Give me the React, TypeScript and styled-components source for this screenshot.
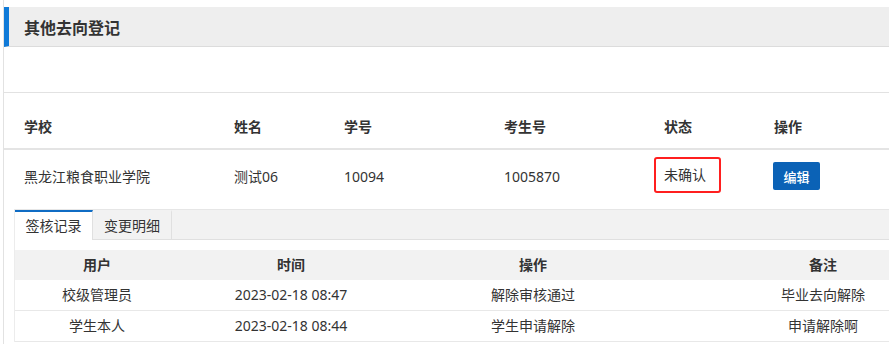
import React from "react";
import styled, { createGlobalStyle } from "styled-components";

const Global = createGlobalStyle`
  html, body { margin: 0; padding: 0; overflow: hidden; background: #fff; }
  body { font-family: "Noto Sans", "Noto Sans CJK SC", sans-serif; color: #333; font-size: 14px; }
`;

const Page = styled.div`
  margin-left: 3px;
  width: calc(100vw - 3px);
  min-height: 344px;
  overflow: hidden;
  border-left: 1px solid #e2e2e2;
  padding-top: 7px;
  box-sizing: border-box;
`;

const TitleBar = styled.div`
  height: 39px;
  background: #eeeeee;
  border-left: 5px solid #0f7ad8;
  border-bottom: 1px solid #dcdcdc;
  display: flex;
  align-items: center;
  padding-left: 15px;
  font-size: 16px;
  font-weight: 700;
  color: #333;
`;

const Toolbar = styled.div`
  height: 45px;
  border-bottom: 1px solid #e2e2e2;
`;

const cols = "210px 110px 160px 160px 110px 1fr";

const HeadRow = styled.div`
  display: grid;
  grid-template-columns: ${cols};
  height: 55px;
  border-bottom: 2px solid #e4e4e4;
  align-items: end;
`;

const HeadCell = styled.div`
  padding: 0 0 11px 20px;
  font-weight: 700;
  line-height: 20px;
`;

const DataRow = styled.div`
  display: grid;
  grid-template-columns: ${cols};
  height: 59px;
  align-items: center;
`;

const Cell = styled.div`
  padding-left: 20px;
  line-height: 20px;
  margin-top: -6px;
`;

const StatusBox = styled.span`
  display: inline-flex;
  align-items: center;
  margin-left: -10px;
  width: 67px;
  height: 36px;
  box-sizing: border-box;
  border: 2px solid #ff1f1f;
  border-radius: 3px;
  padding-left: 8px;
  margin-top: -4px;
`;

const EditButton = styled.button`
  font-family: "Noto Sans CJK SC", sans-serif;
  margin-left: -1px;
  height: 28px;
  width: 47px;
  border: none;
  border-radius: 2px;
  background: #0b62b6;
  color: #fff;
  font-size: 13px;
  font-weight: 500;
  padding: 0;
  margin-top: -1px;
`;

const Detail = styled.div`
  margin-left: 10px;
  border-left: 1px solid #ececec;
  border-top: 1px solid #e6e6e6;
`;

const TabBar = styled.div`
  display: flex;
  height: 29px;
  background: #f2f2f2;
  border-bottom: 1px solid #e0e0e0;
`;

const Tab = styled.div<{ $active?: boolean }>`
  width: ${(p) => (p.$active ? "78px" : "79px")};
  box-sizing: border-box;
  display: flex;
  align-items: center;
  justify-content: center;
  font-size: 14px;
  color: #333;
  background: ${(p) => (p.$active ? "#fff" : "transparent")};
  border-top: 2px solid ${(p) => (p.$active ? "#0f6cc4" : "transparent")};
  border-right: 1px solid #e0e0e0;
  height: ${(p) => (p.$active ? "30px" : "29px")};
  padding-bottom: 2px;
`;

const innerCols = "164px 224px 260px 320px";

const InnerTable = styled.div`
  margin-top: 10px;
`;

const InnerHead = styled.div`
  display: grid;
  grid-template-columns: ${innerCols};
  height: 30px;
  background: #f2f2f2;
  align-items: center;
  font-weight: 700;
`;

const InnerRow = styled.div<{ $first?: boolean }>`
  display: grid;
  grid-template-columns: ${innerCols};
  height: 30px;
  border-top: ${(p) => (p.$first ? "none" : "1px solid #e8e8e8")};
  align-items: center;
`;

const InnerCell = styled.div`
  text-align: center;
  line-height: 20px;
  white-space: nowrap;
`;

const RowsWrap = styled.div`
  & > div:last-child { border-bottom: 1px solid #e8e8e8; }
`;

const records = [
  ["校级管理员", "2023-02-18 08:47", "解除审核通过", "毕业去向解除"],
  ["学生本人", "2023-02-18 08:44", "学生申请解除", "申请解除啊"],
];

export default function App() {
  return (
    <>
      <Global />
      <Page>
        <TitleBar>其他去向登记</TitleBar>
        <Toolbar />
        <HeadRow>
          {["学校", "姓名", "学号", "考生号", "状态", "操作"].map((h) => (
            <HeadCell key={h}>{h}</HeadCell>
          ))}
        </HeadRow>
        <DataRow>
          <Cell>黑龙江粮食职业学院</Cell>
          <Cell>测试06</Cell>
          <Cell>10094</Cell>
          <Cell>1005870</Cell>
          <Cell>
            <StatusBox>未确认</StatusBox>
          </Cell>
          <Cell>
            <EditButton>编辑</EditButton>
          </Cell>
        </DataRow>
        <Detail>
          <TabBar>
            <Tab $active>签核记录</Tab>
            <Tab>变更明细</Tab>
          </TabBar>
          <InnerTable>
            <InnerHead>
              {["用户", "时间", "操作", "备注"].map((h) => (
                <InnerCell key={h}>{h}</InnerCell>
              ))}
            </InnerHead>
            <RowsWrap>
              {records.map((r, i) => (
                <InnerRow key={i} $first={i === 0}>
                  {r.map((c, j) => (
                    <InnerCell key={j}>{c}</InnerCell>
                  ))}
                </InnerRow>
              ))}
            </RowsWrap>
          </InnerTable>
        </Detail>
      </Page>
    </>
  );
}
